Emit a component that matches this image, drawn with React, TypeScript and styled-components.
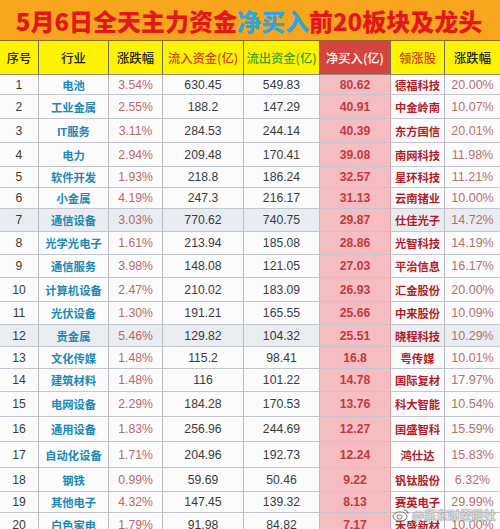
import React from "react";
import styled, { createGlobalStyle } from "styled-components";

const Global = createGlobalStyle`
  html, body { margin: 0; padding: 0; background: #ffffff; }
  body { width: 500px; height: 529px; overflow: hidden; }
`;

const COLS = "39px 70px 54px 81px 76px 71px 54px 55px";

const Page = styled.div`
  width: 500px;
  height: 529px;
  overflow: hidden;
  position: relative;
  background: #fbfbfc;
  font-family: "Liberation Sans", "Noto Sans CJK SC", sans-serif;
`;

const TitleBar = styled.div`
  height: 40px;
  background: #f6a51c;
  border-bottom: 1px solid #8a6a2a;
  display: flex;
  align-items: center;
  justify-content: center;
  font-family: "Noto Sans CJK SC", sans-serif;
  font-weight: 900;
  font-size: 24px;
  letter-spacing: 0px;
  color: #e3161c;
  padding-right: 2px;
`;

const Blue = styled.span`
  color: #30a6dc;
`;

const Grid = styled.div<{ $h: number; $bg?: string }>`
  display: grid;
  grid-template-columns: ${COLS};
  height: ${(p) => p.$h}px;
  background: ${(p) => p.$bg || "#fbfbfc"};
`;

const HeadCell = styled.div<{ $color: string; $bg?: string }>`
  display: flex;
  align-items: center;
  justify-content: center;
  background: ${(p) => p.$bg || "#fdf200"};
  color: ${(p) => p.$color};
  font-family: "Noto Sans CJK SC", sans-serif;
  font-size: 12.3px;
  font-weight: 500;
  border-right: 1px solid #6f6f5a;
  border-bottom: 1px solid #8f8f80;
  white-space: nowrap;
  &:last-child { border-right: none; }
`;

type Kind = "idx" | "ind" | "pct" | "num" | "net" | "lead" | "pct2";

const Cell = styled.div<{ $kind: Kind }>`
  display: flex;
  align-items: center;
  justify-content: center;
  white-space: nowrap;
  border-right: 1px solid ${(p) => (p.$kind === "net" ? "#d9a3a8" : "#b9bdc3")};
  border-bottom: 1px solid #c3c7cd;
  background: ${(p) => (p.$kind === "net" ? "#f5bcc1" : "transparent")};
  color: ${(p) =>
    ({
      idx: "#3a3a3a",
      ind: "#2188b4",
      pct: "#b8686b",
      num: "#3b3b3b",
      net: "#c23a3e",
      lead: "#b01d28",
      pct2: "#b8706f",
    })[p.$kind]};
  font-size: ${(p) =>
    p.$kind === "ind" || p.$kind === "lead" ? "11.3px" : p.$kind === "pct2" ? "12.5px" : "12.2px"};
  font-weight: ${(p) =>
    p.$kind === "ind" || p.$kind === "lead" || p.$kind === "net" ? 700 : 400};
  &:last-child { border-right: none; }
`;

const Watermark = styled.div`
  position: absolute;
  right: 4px;
  bottom: 6px;
  display: flex;
  align-items: center;
  gap: 2px;
  font-family: "Noto Sans CJK SC", sans-serif;
  font-size: 12px;
  font-weight: 700;
  color: rgba(255, 255, 255, 0.75);
  text-shadow: 0 0 1px rgba(90, 90, 90, 0.7), 0 0 1px rgba(90, 90, 90, 0.7);
`;

const rows: [string, string, string, string, string, string, string, string, number, string?][] = [
  ["1", "电池", "3.54%", "630.45", "549.83", "80.62", "德福科技", "20.00%", 20],
  ["2", "工业金属", "2.55%", "188.2", "147.29", "40.91", "中金岭南", "10.07%", 24],
  ["3", "IT服务", "3.11%", "284.53", "244.14", "40.39", "东方国信", "20.01%", 24],
  ["4", "电力", "2.94%", "209.48", "170.41", "39.08", "南网科技", "11.98%", 24],
  ["5", "软件开发", "1.93%", "218.8", "186.24", "32.57", "星环科技", "11.21%", 21],
  ["6", "小金属", "4.19%", "247.3", "216.17", "31.13", "云南锗业", "10.00%", 21],
  ["7", "通信设备", "3.03%", "770.62", "740.75", "29.87", "仕佳光子", "14.72%", 23, "#e8ecf0"],
  ["8", "光学光电子", "1.61%", "213.94", "185.08", "28.86", "光智科技", "14.19%", 23],
  ["9", "通信服务", "3.98%", "148.08", "121.05", "27.03", "平治信息", "16.17%", 23],
  ["10", "计算机设备", "2.47%", "210.02", "183.09", "26.93", "汇金股份", "20.00%", 24],
  ["11", "光伏设备", "1.30%", "191.21", "165.55", "25.66", "中来股份", "10.09%", 23],
  ["12", "贵金属", "5.46%", "129.82", "104.32", "25.51", "晓程科技", "10.29%", 22, "#e9ecf0"],
  ["13", "文化传媒", "1.48%", "115.2", "98.41", "16.8", "粤传媒", "10.01%", 22],
  ["14", "建筑材料", "1.48%", "116", "101.22", "14.78", "国际复材", "17.97%", 23],
  ["15", "电网设备", "2.29%", "184.28", "170.53", "13.76", "科大智能", "10.54%", 25],
  ["16", "通用设备", "1.83%", "256.96", "244.69", "12.27", "国盛智科", "15.59%", 25],
  ["17", "自动化设备", "1.71%", "204.96", "192.73", "12.24", "鸿仕达", "15.83%", 26],
  ["18", "钢铁", "0.99%", "59.69", "50.46", "9.22", "钒钛股份", "6.32%", 24],
  ["19", "其他电子", "4.32%", "147.45", "139.32", "8.13", "赛英电子", "29.99%", 21],
  ["20", "白色家电", "1.79%", "91.98", "84.82", "7.17", "禾盛新材", "10.00%", 24],
];

const kinds: Kind[] = ["idx", "ind", "pct", "num", "num", "net", "lead", "pct2"];

const headers: [string, string, string?][] = [
  ["序号", "#222"],
  ["行业", "#222"],
  ["涨跌幅", "#222"],
  ["流入资金(亿)", "#d2401e"],
  ["流出资金(亿)", "#3aa12c"],
  ["净买入(亿)", "#ffffff", "#d6443f"],
  ["领涨股", "#c8401c"],
  ["涨跌幅", "#222"],
];

const WeiboIcon = () => (
  <svg width="18" height="14" viewBox="0 0 18 14">
    <ellipse cx="8" cy="8.5" rx="7" ry="4.6" fill="rgba(255,255,255,0.7)" stroke="#777" strokeWidth="1" />
    <ellipse cx="7.5" cy="9" rx="2.6" ry="2" fill="none" stroke="#777" strokeWidth="1" />
    <path d="M12 2 A4 4 0 0 1 16 6" fill="none" stroke="#777" strokeWidth="1.2" />
  </svg>
);

export default function App() {
  return (
    <Page>
      <Global />
      <TitleBar>
        5月6日全天主力资金<Blue>净买入</Blue>前20板块及龙头
      </TitleBar>
      <Grid $h={34}>
        {headers.map(([t, c, bg], i) => (
          <HeadCell key={i} $color={c} $bg={bg}>
            {t}
          </HeadCell>
        ))}
      </Grid>
      {rows.map((r) => (
        <Grid key={r[0]} $h={r[8]} $bg={r[9]}>
          {kinds.map((k, i) => (
            <Cell key={i} $kind={k}>
              {r[i] as string}
            </Cell>
          ))}
        </Grid>
      ))}
      <Watermark>
        <WeiboIcon />
        @鑫东财经股社
      </Watermark>
    </Page>
  );
}
